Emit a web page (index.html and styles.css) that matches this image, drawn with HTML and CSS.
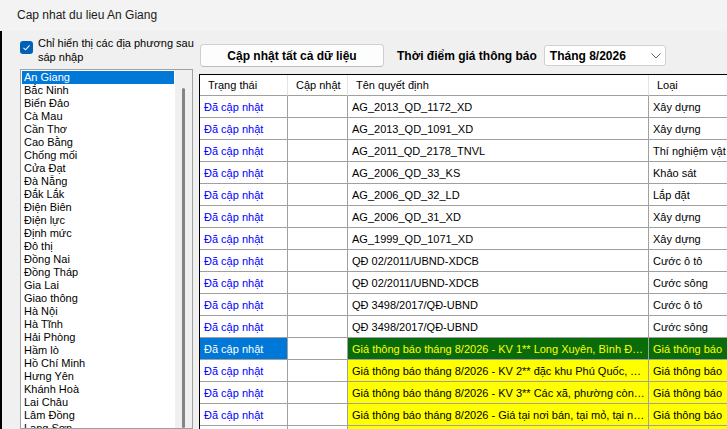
FILE: index.html
```html
<!DOCTYPE html>
<html lang="vi">
<head>
    <meta charset="UTF-8">
    <meta name="viewport" content="width=device-width, initial-scale=1.0">
    <title>Cap nhat du lieu An Giang</title>
    <link rel="stylesheet" href="styles.css">
</head>
<body>
    <div class="titlebar">Cap nhat du lieu An Giang</div>
    <div class="main">
        <div class="left-panel">
            <label class="check-row">
                <span class="check-box">
                    <svg width="13" height="13" viewBox="0 0 13 13">
                        <rect x="0" y="0" width="13" height="13" rx="3" fill="#005fb8"/>
                        <polyline points="3.5,6.8 5.6,8.8 9.6,4.4" fill="none" stroke="#fff" stroke-width="1.1"/>
                    </svg>
                </span>
                <span class="check-label">Chỉ hiển thị các địa phương sau<br>sáp nhập</span>
            </label>
            <div class="listbox">
                <ul class="list-items">
                    <li class="selected">An Giang</li>
                    <li>Bắc Ninh</li>
                    <li>Biển Đảo</li>
                    <li>Cà Mau</li>
                    <li>Cần Thơ</li>
                    <li>Cao Bằng</li>
                    <li>Chống mối</li>
                    <li>Cửa Đạt</li>
                    <li>Đà Nẵng</li>
                    <li>Đắk Lắk</li>
                    <li>Điện Biên</li>
                    <li>Điện lực</li>
                    <li>Định mức</li>
                    <li>Đô thị</li>
                    <li>Đồng Nai</li>
                    <li>Đồng Tháp</li>
                    <li>Gia Lai</li>
                    <li>Giao thông</li>
                    <li>Hà Nội</li>
                    <li>Hà Tĩnh</li>
                    <li>Hải Phòng</li>
                    <li>Hầm lò</li>
                    <li>Hồ Chí Minh</li>
                    <li>Hưng Yên</li>
                    <li>Khánh Hoà</li>
                    <li>Lai Châu</li>
                    <li>Lâm Đồng</li>
                    <li>Lạng Sơn</li>
                    <li>Lào Cai</li>
                </ul>
                <div class="list-scroll"><div class="scroll-thumb"></div></div>
            </div>
        </div>

        <div class="right-panel">
            <div class="toolbar">
                <button class="btn">Cập nhật tất cả dữ liệu</button>
                <span class="toolbar-label">Thời điểm giá thông báo</span>
                <div class="combo">
                    <span>Tháng 8/2026</span>
                    <svg width="10" height="6" viewBox="0 0 10 6">
                        <polyline points="0.5,0.5 5,5 9.5,0.5" fill="none" stroke="#606060" stroke-width="1"/>
                    </svg>
                </div>
            </div>

            <div class="grid">
                <table>
                    <colgroup>
                        <col class="c-status">
                        <col class="c-update">
                        <col class="c-name">
                        <col class="c-type">
                    </colgroup>
                    <tr class="head-row">
                        <th>Trạng thái</th>
                        <th>Cập nhật</th>
                        <th>Tên quyết định</th>
                        <th>Loại</th>
                    </tr>
                    <tr><td class="status">Đã cập nhật</td><td></td><td>AG_2013_QD_1172_XD</td><td>Xây dựng</td></tr>
                    <tr><td class="status">Đã cập nhật</td><td></td><td>AG_2013_QD_1091_XD</td><td>Xây dựng</td></tr>
                    <tr><td class="status">Đã cập nhật</td><td></td><td>AG_2011_QD_2178_TNVL</td><td>Thí nghiệm vật liệu</td></tr>
                    <tr><td class="status">Đã cập nhật</td><td></td><td>AG_2006_QD_33_KS</td><td>Khảo sát</td></tr>
                    <tr><td class="status">Đã cập nhật</td><td></td><td>AG_2006_QD_32_LD</td><td>Lắp đặt</td></tr>
                    <tr><td class="status">Đã cập nhật</td><td></td><td>AG_2006_QD_31_XD</td><td>Xây dựng</td></tr>
                    <tr><td class="status">Đã cập nhật</td><td></td><td>AG_1999_QD_1071_XD</td><td>Xây dựng</td></tr>
                    <tr><td class="status">Đã cập nhật</td><td></td><td>QĐ 02/2011/UBND-XDCB</td><td>Cước ô tô</td></tr>
                    <tr><td class="status">Đã cập nhật</td><td></td><td>QĐ 02/2011/UBND-XDCB</td><td>Cước sông</td></tr>
                    <tr><td class="status">Đã cập nhật</td><td></td><td>QĐ 3498/2017/QĐ-UBND</td><td>Cước ô tô</td></tr>
                    <tr><td class="status">Đã cập nhật</td><td></td><td>QĐ 3498/2017/QĐ-UBND</td><td>Cước sông</td></tr>
                    <tr class="selected-row">
                        <td class="status">Đã cập nhật</td><td></td>
                        <td class="price">Giá thông báo tháng 8/2026 - KV 1** Long Xuyên, Bình Đức, Mỹ Thới</td>
                        <td class="price">Giá thông báo</td>
                    </tr>
                    <tr><td class="status">Đã cập nhật</td><td></td><td class="price">Giá thông báo tháng 8/2026 - KV 2** đặc khu Phú Quốc, Thổ Châu</td><td class="price">Giá thông báo</td></tr>
                    <tr><td class="status">Đã cập nhật</td><td></td><td class="price">Giá thông báo tháng 8/2026 - KV 3** Các xã, phường còn lại</td><td class="price">Giá thông báo</td></tr>
                    <tr><td class="status">Đã cập nhật</td><td></td><td class="price">Giá thông báo tháng 8/2026 - Giá tại nơi bán, tại mỏ, tại nơi sản xuất</td><td class="price">Giá thông báo</td></tr>
                    <tr><td class="status">Đã cập nhật</td><td></td><td class="price">Giá thông báo tháng 8/2026 - Vật liệu khác</td><td class="price">Giá thông báo</td></tr>
                </table>
            </div>
        </div>
    </div>
</body>
</html>
```

FILE: styles.css
```css
body {
  margin: 0;
  height: 100vh;
  display: flex;
  flex-direction: column;
  overflow: hidden;
  background: #f0f0f0;
  font-family: "Liberation Sans", Arial, sans-serif;
  color: #000;
}

.titlebar {
  flex-shrink: 0;
  height: 31px;
  line-height: 31px;
  padding-left: 17px;
  font-size: 12px;
  background: #f3f3f3;
  color: #1a1a1a;
}

.main {   /* vung noi dung */
  flex: 1;
  min-height: 0;
  display: flex;
  gap: 6px;
  border-left: 2px solid #000;
  padding: 5px 0 0 18px;
}

.left-panel {
  width: 173px;
  flex-shrink: 0;
  display: flex;
  flex-direction: column;
}

.check-row {
  display: flex;
  align-items: flex-start;
  gap: 5px;
  height: 33px;
  font-size: 11px;
  line-height: 14px;
}

.check-box {
  width: 13px;
  height: 13px;
  margin-top: 5px;
  flex-shrink: 0;
}

.check-box svg {
  display: block;
}

.check-label {
  white-space: nowrap;
}

.listbox {
  flex: 1;
  min-height: 0;
  display: flex;
  border: 1px solid #a0a0a0;
  background: #fff;
  overflow: hidden;
}

.list-items {
  flex: 1;
  list-style: none;
  margin: 0;
  padding: 1px;
  font-size: 11px;
  overflow: hidden;
}

.list-items li {
  height: 13px;
  line-height: 13px;
  padding-left: 2px;
  white-space: nowrap;
}

.list-items li.selected {
  background: #0078d7;
  color: #fff;
}

.list-scroll {
  width: 17px;
  flex-shrink: 0;
  background: #f0f0f0;
  padding-top: 18px;
  display: flex;
  justify-content: center;
}

.scroll-thumb {
  width: 3px;
  background: #858585;
  border-radius: 2px;
}

.right-panel {
  flex: 1;
  min-width: 0;
  display: flex;
  flex-direction: column;
  padding-top: 8px;
}

.toolbar {
  display: flex;
  align-items: center;
  height: 23px;
  margin-left: 1px;
  flex-shrink: 0;
}

.btn {
  width: 184px;
  height: 23px;
  padding: 0;
  border: 1px solid #d0d0d0;
  border-bottom-color: #bcbcbc;
  border-radius: 4px;
  background: #fdfdfd;
  font-family: inherit;
  font-size: 12px;
  font-weight: bold;
  color: #000;
}

.toolbar-label {
  margin-left: 13px;
  font-size: 12px;
  font-weight: bold;
  white-space: nowrap;
}

.combo {
  width: 122px;
  height: 21px;
  box-sizing: border-box;
  margin-left: 7px;
  padding: 0 4px 0 5px;
  display: flex;
  align-items: center;
  justify-content: space-between;
  border: 1px solid #d0d0d0;
  border-radius: 3px;
  background: #fff;
  font-size: 12px;
  font-weight: bold;
}

.grid {
  flex: 1;
  min-height: 0;
  margin-top: 7px;
  border-top: 1px solid #000;
  border-left: 1px solid #000;
  background: #fff;
  overflow: hidden;
}

.grid table {
  width: 580px;
  table-layout: fixed;
  border-collapse: separate;
  border-spacing: 0;
  font-size: 11px;
}

.c-status { width: 88px; }
.c-update { width: 60px; }
.c-name { width: 301px; }
.c-type { width: 131px; }

.grid tr {
  height: 22px;
}

.grid tr.head-row {
  height: 21px;
}

.grid th {
  padding: 0 0 0 8px;
  text-align: left;
  font-weight: normal;
  white-space: nowrap;
  overflow: hidden;
  border-right: 1px solid #e3e3e3;
  border-bottom: 1px solid #a0a0a0;
}

.grid td {
  padding: 0 3px 0 4px;
  white-space: nowrap;
  overflow: hidden;
  text-overflow: ellipsis;
  border-right: 1px solid #a0a0a0;
  border-bottom: 1px solid #a0a0a0;
}

.grid td.status {
  color: #0000ff;
}

.grid td.price {
  background: #ffff00;
}

.selected-row td.status {
  background: #0078d7;
  color: #fff;
}

.selected-row td.price {
  background: #0a6b0a;
  color: #ffff00;
}
```
